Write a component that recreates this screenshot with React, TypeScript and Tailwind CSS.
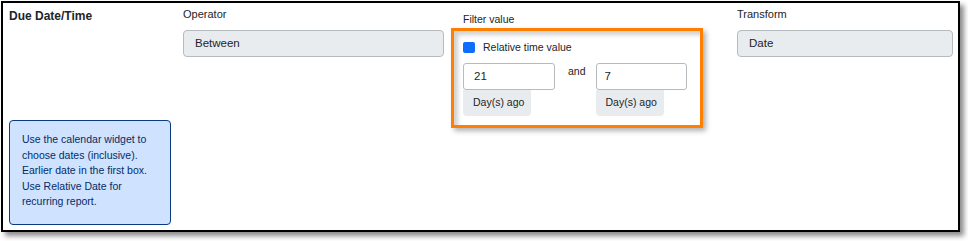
const font = { fontFamily: '"Liberation Sans", Arial, sans-serif' };

const GrayBox = ({ text, width }: { text: string; width: string }) => (
  <div
    className={`${width} h-[27px] flex items-center pl-[11px] bg-[#e9ecef] border border-[#b6bbc0] rounded-[4px] text-[11.5px] text-[#212529]`}
  >
    {text}
  </div>
);

const RelativeInput = ({ value, width, pad }: { value: string; width: string; pad: string }) => (
  <div className="flex flex-col">
    <div
      className={`${width} h-[27px] flex items-center ${pad} bg-white border border-[#b6bbc0] rounded-[3px] text-[11.5px] text-[#212529]`}
    >
      {value}
    </div>
    <div className="w-[68px] h-[26px] flex items-center pl-[10px] bg-[#e9ecef] rounded-b-[4px] text-[10.5px] text-[#212529]">
      Day(s) ago
    </div>
  </div>
);

export default function App() {
  return (
    <div style={font} className="w-[968px] h-[241px] bg-white pt-px pl-px">
      <div className="w-[959px] h-[231px] border-2 border-black bg-white shadow-[4px_4px_5px_rgba(0,0,0,0.45)] flex">
        {/* field name + hint */}
        <div className="w-[180px] flex flex-col pl-[6px] pt-[4px] pb-[5px]">
          <p className="text-[12px] leading-[18px] font-bold text-[#212529]">Due Date/Time</p>
          <div className="mt-auto w-[162px] h-[105px] bg-[#cfe2ff] border border-[#0b3a7e] rounded-[4px] pl-[12px] pr-[10px] pt-[11px] text-[10.5px] leading-[15.6px] text-[#052c65]">
            Use the calendar widget to choose dates (inclusive). Earlier date in the first box. Use Relative Date for recurring report.
          </div>
        </div>

        {/* operator */}
        <div className="w-[261px] flex flex-col pt-[3px]">
          <p className="text-[11px] leading-[16px] text-[#212529] mb-[8px]">Operator</p>
          <GrayBox text="Between" width="w-[261px]" />
        </div>

        {/* filter value */}
        <div className="w-[252px] ml-[7px] flex flex-col pt-[8px]">
          <p className="text-[10.5px] leading-[16px] text-[#212529] pl-[12px] mb-[1px]">Filter value</p>
          <div className="h-[100px] border-[3px] border-[#ff8000] shadow-[3px_3px_5px_rgba(0,0,0,0.3),inset_4px_4px_4px_rgba(0,0,0,0.18)] pl-[9px] pt-[9px]">
            <div className="flex items-center gap-[8px]">
              <span className="w-[12px] h-[11px] rounded-[2px] bg-[#0d6efd]" />
              <span className="text-[10.5px] leading-[14px] text-[#212529]">Relative time value</span>
            </div>
            <div className="flex mt-[9px]">
              <RelativeInput value="21" width="w-[92px]" pad="pl-[10px]" />
              <span className="ml-[13px] mr-[10px] text-[10.5px] leading-[14px] mt-[1px] text-[#212529]">and</span>
              <RelativeInput value="7" width="w-[91px]" pad="pl-[8px]" />
            </div>
          </div>
        </div>

        {/* transform */}
        <div className="w-[216px] ml-[34px] flex flex-col pt-[3px]">
          <p className="text-[11px] leading-[16px] text-[#212529] mb-[8px]">Transform</p>
          <GrayBox text="Date" width="w-[216px]" />
        </div>
      </div>
    </div>
  );
}
